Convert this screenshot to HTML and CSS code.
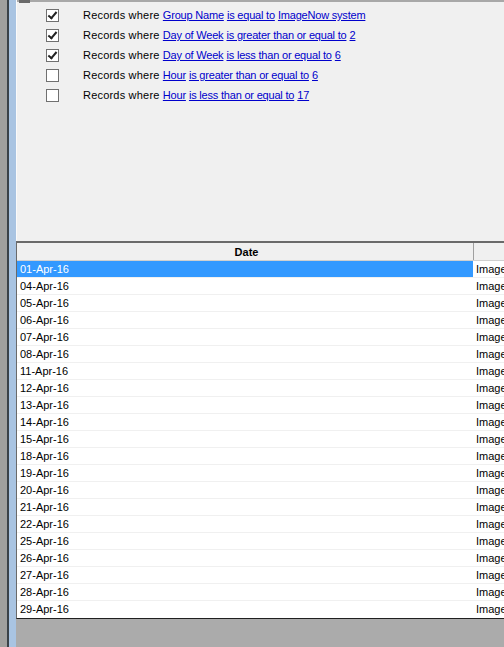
FILE: index.html
```html
<!DOCTYPE html>
<html>
<head>
<meta charset="utf-8">
<link rel="stylesheet" href="styles.css">
</head>
<body>
<div class="frame">
  <div class="edge-gray"></div>
  <div class="edge-dark"></div>
  <div class="edge-blue"></div>
  <div class="main">
    <div class="panel">
      <div class="topline"><span class="tab"></span></div>
      <div class="filters">
        <div class="filter"><span class="cb checked"></span><span class="ftext"><span class="lead">Records where </span><a>Group Name</a> <a>is equal to</a> <a>ImageNow system</a></span></div>
        <div class="filter"><span class="cb checked"></span><span class="ftext"><span class="lead">Records where </span><a>Day of Week</a> <a>is greater than or equal to</a> <a>2</a></span></div>
        <div class="filter"><span class="cb checked"></span><span class="ftext"><span class="lead">Records where </span><a>Day of Week</a> <a>is less than or equal to</a> <a>6</a></span></div>
        <div class="filter"><span class="cb"></span><span class="ftext"><span class="lead">Records where </span><a>Hour</a> <a>is greater than or equal to</a> <a>6</a></span></div>
        <div class="filter"><span class="cb"></span><span class="ftext"><span class="lead">Records where </span><a>Hour</a> <a>is less than or equal to</a> <a>17</a></span></div>
      </div>
    </div>
    <div class="grid">
      <div class="head"><div class="hc c1">Date</div><div class="hc c2"></div></div>
      <div class="row sel"><div class="c1">01-Apr-16</div><div class="c2">Image</div></div>
      <div class="row"><div class="c1">04-Apr-16</div><div class="c2">Image</div></div>
      <div class="row"><div class="c1">05-Apr-16</div><div class="c2">Image</div></div>
      <div class="row"><div class="c1">06-Apr-16</div><div class="c2">Image</div></div>
      <div class="row"><div class="c1">07-Apr-16</div><div class="c2">Image</div></div>
      <div class="row"><div class="c1">08-Apr-16</div><div class="c2">Image</div></div>
      <div class="row"><div class="c1">11-Apr-16</div><div class="c2">Image</div></div>
      <div class="row"><div class="c1">12-Apr-16</div><div class="c2">Image</div></div>
      <div class="row"><div class="c1">13-Apr-16</div><div class="c2">Image</div></div>
      <div class="row"><div class="c1">14-Apr-16</div><div class="c2">Image</div></div>
      <div class="row"><div class="c1">15-Apr-16</div><div class="c2">Image</div></div>
      <div class="row"><div class="c1">18-Apr-16</div><div class="c2">Image</div></div>
      <div class="row"><div class="c1">19-Apr-16</div><div class="c2">Image</div></div>
      <div class="row"><div class="c1">20-Apr-16</div><div class="c2">Image</div></div>
      <div class="row"><div class="c1">21-Apr-16</div><div class="c2">Image</div></div>
      <div class="row"><div class="c1">22-Apr-16</div><div class="c2">Image</div></div>
      <div class="row"><div class="c1">25-Apr-16</div><div class="c2">Image</div></div>
      <div class="row"><div class="c1">26-Apr-16</div><div class="c2">Image</div></div>
      <div class="row"><div class="c1">27-Apr-16</div><div class="c2">Image</div></div>
      <div class="row"><div class="c1">28-Apr-16</div><div class="c2">Image</div></div>
      <div class="row last"><div class="c1">29-Apr-16</div><div class="c2">Image</div></div>
    </div>
    <div class="bottom"></div>
  </div>
</div>
</body>
</html>
```

FILE: styles.css
```css
html, body {
  margin: 0;
  padding: 0;
  overflow: hidden;
}
body {
  width: 504px;
  height: 647px;
  font-family: "Liberation Sans", Arial, sans-serif;
  font-size: 11px;
  color: #000;
}
.frame {
  display: flex;
  width: 504px;
  height: 647px;
}
.edge-gray {
  width: 7px;
  background: #a0a09e;
  flex: none;
}
.edge-dark {
  width: 2px;
  background: #3a4248;
  flex: none;
}
.edge-blue {
  width: 7px;
  background: #a9c4e2;
  flex: none;
}
.main {
  flex: 1;
  display: flex;
  flex-direction: column;
  min-width: 0;
}
.panel {
  height: 241px;
  background: #f0f0f0;
  border-left: 1px solid #fafafa;
  box-sizing: border-box;
  display: flex;
  flex-direction: column;
}
.topline {
  height: 2px;
  background: #a8a8a8;
  position: relative;
  flex: none;
}
.tab {
  position: absolute;
  left: 2px;
  top: 0;
  width: 11px;
  height: 3px;
  background: #6a6a6a;
}
.filters {
  padding-top: 3px;
  display: flex;
  flex-direction: column;
}
.filter {
  height: 20px;
  display: flex;
  align-items: center;
}
.cb {
  width: 11px;
  height: 11px;
  border: 1px solid #707070;
  background: #fff;
  margin-left: 29px;
  flex: none;
  position: relative;
}
.cb.checked::after {
  content: "";
  position: absolute;
  left: 3px;
  top: 0px;
  width: 3px;
  height: 7px;
  border-right: 2px solid #222;
  border-bottom: 2px solid #222;
  transform: rotate(40deg);
}
.ftext {
  margin-left: 24px;
  white-space: nowrap;
  color: #000;
}
.lead {
  letter-spacing: 0.2px;
}
.ftext a {
  color: #0000cc;
  text-decoration: underline;
  letter-spacing: -0.2px;
}
.grid {
  border-top: 2px solid #6a6a6a;
  border-left: 1px solid #6a6a6a;
  border-bottom: 1px solid #202020;
  background: #fff;
  display: flex;
  flex-direction: column;
}
.head {
  display: flex;
  height: 17px;
  background: #f0f0f0;
  border-bottom: 1px solid #d0d0d0;
  font-weight: bold;
}
.hc {
  display: flex;
  align-items: center;
}
.head .c1 {
  justify-content: center;
  border-right: 1px solid #a0a0a0;
}
.c1 {
  width: 457px;
  flex: none;
  padding-left: 3px;
  box-sizing: border-box;
}
.c2 {
  flex: 1;
  padding-left: 2px;
  white-space: nowrap;
  overflow: hidden;
}
.row {
  display: flex;
  height: 17px;
  line-height: 16px;
  border-bottom: 1px solid #f0f0f0;
  box-sizing: border-box;
}
.row.last {
  border-bottom: none;
}
.row.sel .c1 {
  background: #3399ff;
  color: #fff;
}
.row .c1 {
  border-right: 1px solid #fff;
}
.bottom {
  flex: 1;
  background: #ababab;
}
```
